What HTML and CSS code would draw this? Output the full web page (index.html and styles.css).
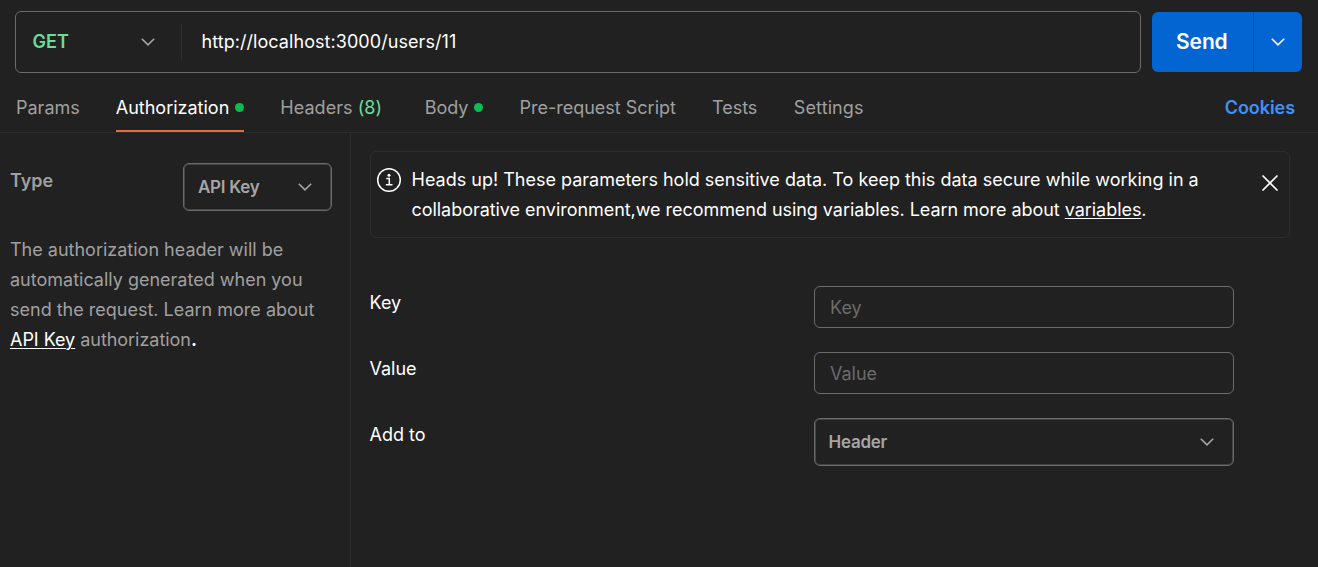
FILE: index.html
```
<!DOCTYPE html>
<html lang="en">
<head>
<meta charset="utf-8">
<title>Request</title>
<link rel="stylesheet" href="styles.css">
</head>
<body>
<div class="app">
  <header class="request-bar">
    <div class="url-box">
      <div class="method"><span>GET</span><svg class="chevron" viewBox="0 0 16 10"><path d="M1.8 1.8 8 7.8l6.200-6"/></svg></div>
      <div class="url">http://localhost:3000/users/11</div>
    </div>
    <div class="send">
      <div class="send-label">Send</div>
      <div class="send-more"><svg class="chevron" viewBox="0 0 16 10"><path d="M1.800 1.800 8 7.800l6.200-6"/></svg></div>
    </div>
  </header>
  <nav class="tabs">
    <div class="tab">Params</div>
    <div class="tab active">Authorization<i class="dot"></i></div>
    <div class="tab headers">Headers <span class="count">(8)</span></div>
    <div class="tab">Body<i class="dot"></i></div>
    <div class="tab">Pre-request Script</div>
    <div class="tab">Tests</div>
    <div class="tab settings">Settings</div>
    <div class="cookies">Cookies</div>
  </nav>
  <main class="content">
    <aside class="side">
      <div class="type-row">
        <div class="type-label">Type</div>
        <div class="select type-select"><span>API Key</span><svg class="chevron" viewBox="0 0 16 10"><path d="M1.800 1.800 8 7.800l6.200-6"/></svg></div>
      </div>
      <p class="help">The authorization header will be<br>automatically generated when you<br>send the request. Learn more about<br><span class="help-end"><a class="link">API Key</a> authorization<b>.</b></span></p>
    </aside>
    <section class="panel">
      <div class="notice">
        <svg class="info" viewBox="0 0 26 26"><circle cx="13" cy="13" r="11.300"/><path d="M10.300 11.600h3v6M9.800 17.800h6.700"/><circle class="fill" cx="13" cy="8.200" r="1.500"/></svg>
        <p class="notice-text">Heads up! These parameters hold sensitive data. To keep this data secure while working in a<br><span class="second">collaborative environment,we recommend using variables. Learn more about <a class="link">variables</a>.</span></p>
        <svg class="close" viewBox="0 0 18 18"><path d="M1.500 1.500l15 15M16.500 1.500l-15 15"/></svg>
      </div>
      <div class="fields">
        <div class="field"><label>Key</label><div class="input">Key</div></div>
        <div class="field"><label>Value</label><div class="input">Value</div></div>
        <div class="field"><label>Add to</label><div class="select wide"><span>Header</span><svg class="chevron" viewBox="0 0 16 10"><path d="M1.800 1.800 8 7.800l6.200-6"/></svg></div></div>
      </div>
    </section>
  </main>
</div>
</body>
</html>
```
FILE: styles.css
```
* { box-sizing: border-box; }
body {
  margin: 0;
  background: #212121;
  color: #fff;
  font: 18px/30px Inter, "Liberation Sans", sans-serif;
}
p { margin: 0; }
svg { display: block; fill: none; stroke: currentColor; flex: none; }
.app { height: 567px; display: flex; flex-direction: column; overflow: hidden; white-space: nowrap; }

.request-bar { display: flex; gap: 11px; padding: 11px 16px 0 15px; height: 73px; }
.url-box { flex: 1; height: 62px; border: 1px solid #6b6b6b; border-radius: 6px; display: flex; align-items: center; }
.method {
  width: 166px; height: 36px; padding: 0 25px 0 16.5px;
  border-right: 1px solid #303030;
  display: flex; align-items: center; justify-content: space-between;
  color: #6bdd9a; font-weight: 600;
}
.chevron { width: 16px; height: 10px; stroke-width: 1.6; color: #a6a6a6; }
.url { padding-left: 19.5px; letter-spacing: 0.06px; }
.send { margin-top: 1px; width: 150px; height: 60px; border-radius: 6px; background: #0265d2; display: flex; }
.send-label { width: 102px; border-right: 1px solid #0251a8; display: flex; align-items: center; padding-left: 24px; font-size: 21px; font-weight: 600; letter-spacing: -0.1px; }
.send-more { flex: 1; display: flex; align-items: center; justify-content: center; }
.send-more .chevron { color: #fff; }

.tabs { display: flex; height: 60px; padding: 19px 23px 0 16px; border-bottom: 1px solid #2d2d2d; color: #a0a0a0; gap: 36px; }
.tab { display: flex; align-items: center; height: 40px; padding-bottom: 9px; white-space: pre; }
.tab.active { color: #fff; border-bottom: 2px solid #e56a3c; padding-bottom: 7px; }
.tab.headers { margin-right: 6.500px; letter-spacing: 0.05px; }
.tab.settings { letter-spacing: 0.1px; margin-left: 0.500px; }
.dot { width: 9px; height: 9px; border-radius: 50%; background: #0cbb52; margin-left: 6px; }
.count { color: #6bdd9a; }
.cookies { margin-left: auto; height: 31px; line-height: 31px; color: #4090f5; font-weight: 600; letter-spacing: -0.05px; }

.content { flex: 1; display: flex; }
.side { width: 351px; border-right: 1px solid #2d2d2d; padding: 30px 18px 0 10px; color: #a0a0a0; }
.type-row { display: flex; justify-content: space-between; align-items: flex-start; }
.type-label { font-weight: 600; padding-top: 3px; }
.select {
  height: 48px; border: 1px solid #6b6b6b; border-radius: 6px;
  box-shadow: inset 0 0 0 1px #444;
  display: flex; align-items: center; justify-content: space-between;
  color: #a6a6a6; font-size: 17px; font-weight: 600; letter-spacing: -0.25px;
}
.type-select { width: 149px; padding: 0 18px 0 14px; }
.help { margin-top: 24px; }
.help-end { letter-spacing: -0.04px; }
.link { color: #fff; text-decoration: underline; text-underline-offset: 2px; text-decoration-thickness: 1px; }
.help b { color: #fff; }

.panel { flex: 1; padding: 18px 28px 0 19px; }
.notice { height: 87px; border: 1px solid #2d2d2d; border-radius: 6px; display: flex; padding: 13px 10px 0 5px; }
.info { width: 26px; height: 26px; margin-top: 2px; stroke-width: 1.500; }
.info .fill { fill: currentColor; stroke: none; }
.notice-text { margin-left: 9.500px; }
.notice-text .second { letter-spacing: -0.045px; }
.close { width: 18px; height: 18px; margin: 9px 0 0 auto; stroke-width: 1.700; }
.fields { margin-top: 48px; display: flex; flex-direction: column; gap: 24px; width: 864px; }
.field { display: flex; justify-content: space-between; }
.field label { padding-top: 2px; margin-left: -0.500px; }
.input { width: 420px; height: 42px; border: 1px solid #6b6b6b; border-radius: 6px; padding: 6px 15px; color: #6b6b6b; }
.wide { width: 420px; padding: 0 18px 0 13.500px; }
```
